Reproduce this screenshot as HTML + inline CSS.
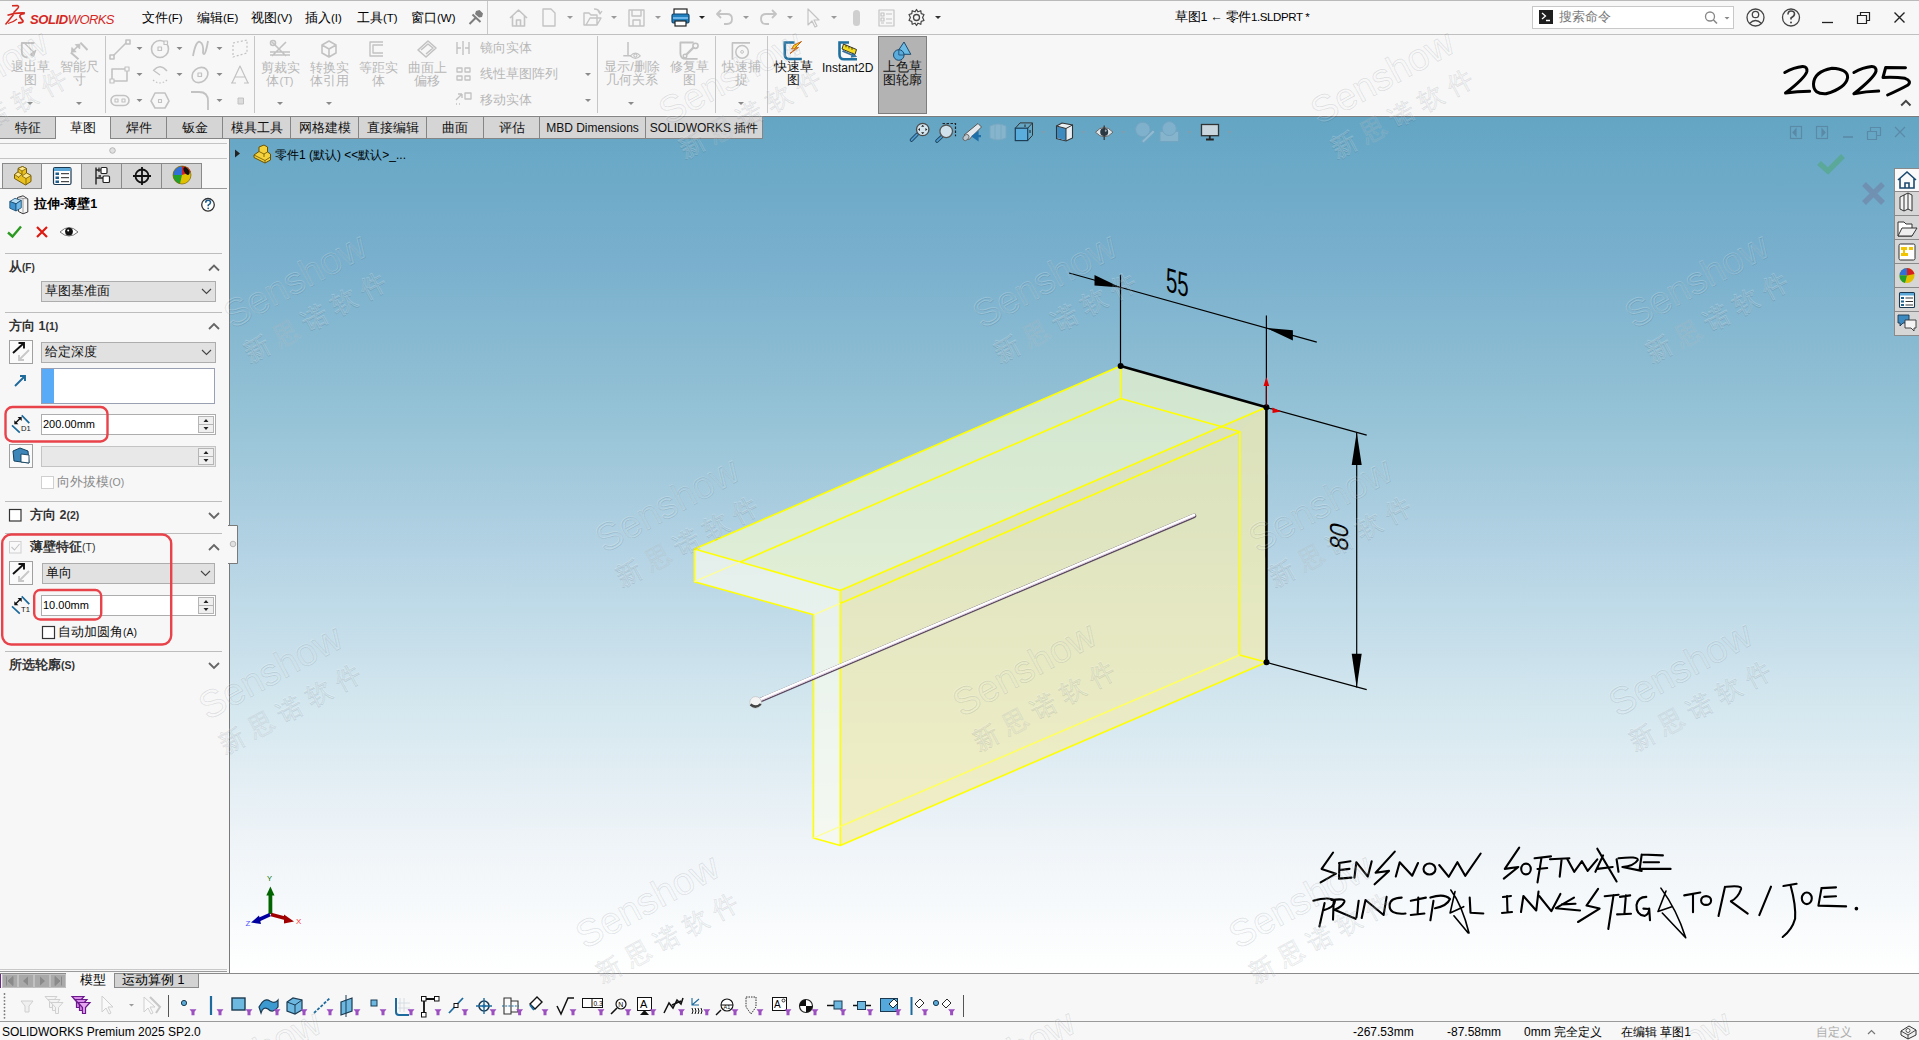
<!DOCTYPE html>
<html><head><meta charset="utf-8">
<style>
*{box-sizing:border-box}
html,body{margin:0;padding:0}
body{width:1919px;height:1040px;position:relative;overflow:hidden;background:#f7f7f7;font-family:"Liberation Sans",sans-serif;font-size:13px;color:#000}
.a{position:absolute}
.t{position:absolute;white-space:nowrap;line-height:1}
#topline{left:0;top:0;width:1919px;height:1px;background:#bababa}
#menusep{left:0;top:34px;width:1919px;height:1px;background:#c0c0c0}
#vp{left:230px;top:116px;width:1689px;height:857px;background:linear-gradient(to bottom,#64a5c4 0px,#68a8c6 29px,#78afcd 137px,#93c1d5 289px,#b4d3e4 437px,#d4e7ef 589px,#eff4f8 727px,#fdfefe 844px,#ffffff 857px)}
.tab{position:absolute;top:116px;height:23px;background:#d5d5d5;border:1px solid #858585;border-left:none;text-align:center;line-height:21px;font-size:13px;color:#111;white-space:nowrap}
.tab.act{background:#f7f7f7;border-bottom:none}
#panel{left:0;top:139px;width:230px;height:834px;background:#f7f7f7;border-right:1px solid #7a7a7a}
.sep{position:absolute;height:1px;background:#b9b9b9}
.hdr{position:absolute;font-weight:bold;font-size:12.5px;color:#222}
.dd{position:absolute;background:#e1e1e1;border:1px solid #adadad}
.inp{position:absolute;background:#fff;border:1px solid #adadad}
.ibox{position:absolute;background:#fafafa;border:1px solid #a8a8a8}
.redr{position:absolute;border:2.5px solid #e8434a;border-radius:8px}
.gray{color:#b0b0b0}
</style></head><body>
<div class="a" id="topline"></div>
<div class="a" id="menusep"></div>
<!-- menu bar -->
<svg class="a" style="left:4px;top:4px" width="24" height="22" viewBox="0 0 24 22">
<path d="M8 1.8 L13.5 1.6 Q15.5 2.2 13.8 4.2 L9.5 8.8" fill="none" stroke="#d5281f" stroke-width="1.5"/>
<path d="M3.5 11.2 Q12 8.5 21 9" fill="none" stroke="#d5281f" stroke-width="1.6"/>
<path d="M1.5 20.5 L9.5 10.5" fill="none" stroke="#d5281f" stroke-width="1.5"/>
<path d="M4 19.5 Q9 18.5 13 15" fill="none" stroke="#d5281f" stroke-width="1.2"/>
<path d="M20.5 9.5 Q15 10 16 13 L19 17 Q19.5 18.8 14 18.8" fill="none" stroke="#d5281f" stroke-width="1.8"/>
</svg>
<div class="t" style="left:30px;top:12.5px;font-size:13px;color:#d5281f;font-style:italic;letter-spacing:-0.6px"><b style="letter-spacing:-0.4px">SOLID</b>WORKS</div>
<div class="t" style="left:142px;top:11px;font-size:13px">文件<span style="font-size:11.5px">(F)</span></div>
<div class="t" style="left:197px;top:11px;font-size:13px">编辑<span style="font-size:11.5px">(E)</span></div>
<div class="t" style="left:251px;top:11px;font-size:13px">视图<span style="font-size:11.5px">(V)</span></div>
<div class="t" style="left:305px;top:11px;font-size:13px">插入<span style="font-size:11.5px">(I)</span></div>
<div class="t" style="left:357px;top:11px;font-size:13px">工具<span style="font-size:11.5px">(T)</span></div>
<div class="t" style="left:411px;top:11px;font-size:13px">窗口<span style="font-size:11.5px">(W)</span></div>
<div class="t" style="left:1175px;top:11px;font-size:12.5px;letter-spacing:-0.3px">草图1 ← 零件<span style="font-size:11.5px;letter-spacing:-0.4px">1.SLDPRT *</span></div>


<!-- quick access -->
<svg class="a" style="left:0;top:0" width="1919" height="116" viewBox="0 0 1919 116">
<g fill="none" stroke-linejoin="round">
<!-- pin -->
<path d="M476 11 L479.5 10 L483 13.5 L482 17 L479 17.5 L475 14 Z" fill="#7e7e7e" stroke="none"/>
<path d="M472.5 14.5 L480.5 22 M469.5 24 L476 17.5" stroke="#7e7e7e" stroke-width="2"/>
<line x1="487.5" y1="1" x2="487.5" y2="34" stroke="#c8c8c8"/>
<!-- home -->
<path d="M510 18 L518.5 10 L527 18 M512.5 16 V26 H524.5 V16 M516.5 26 V20 H520.5 V26" stroke="#c4c4c4" stroke-width="1.6"/>
<!-- new -->
<path d="M543 9 H551 L555 13 V26 H543 Z" stroke="#c4c4c4" stroke-width="1.4"/>
<!-- open -->
<path d="M584 13 H589 L591 15 H597 V25 H584 Z M586 25 L590 18 H601 L597 25" stroke="#c4c4c4" stroke-width="1.4"/>
<path d="M594 9 Q599 9 600 13 M598 11 L600 14 L602 11" stroke="#c4c4c4" stroke-width="1.3"/>
<!-- save -->
<path d="M629 10 H644 V26 H629 Z M632 10 V16 H641 V10 M633 20 H640 V26 H633 Z" stroke="#c4c4c4" stroke-width="1.4"/>
<!-- undo -->
<path d="M718 14 H727 Q732 14 732 19 Q732 24 727 24 H724 M721 10 L717 14 L721 18" stroke="#c4c4c4" stroke-width="1.8"/>
<!-- redo -->
<path d="M775 14 H766 Q761 14 761 19 Q761 24 766 24 H769 M772 10 L776 14 L772 18" stroke="#c4c4c4" stroke-width="1.8"/>
<!-- cursor -->
<path d="M808 9 L808 25 L812 21 L815 27 L817 26 L814 20 L819 20 Z" stroke="#c4c4c4" stroke-width="1.2"/>
<!-- rebuild pill -->
<rect x="853" y="10" width="7" height="16" rx="3.5" fill="#cfcfcf" stroke="none"/>
<!-- properties -->
<path d="M879 10 H894 V26 H879 Z M881 13 H884 V16 H881 Z M881 18 H884 V21 H881 Z M886 14 H892 M886 19 H892 M881 23 H884 M886 23 H892" stroke="#c4c4c4" stroke-width="1.2"/>
<!-- gear -->
<circle cx="916.5" cy="17.5" r="3" stroke="#444" stroke-width="1.3"/>
<path d="M916.5 9.5 L918 11.8 L920.8 10.7 L921.2 13.6 L924 14.5 L922.6 17.5 L924 20.5 L921.2 21.4 L920.8 24.3 L918 23.2 L916.5 25.5 L915 23.2 L912.2 24.3 L911.8 21.4 L909 20.5 L910.4 17.5 L909 14.5 L911.8 13.6 L912.2 10.7 L915 11.8 Z" stroke="#444" stroke-width="1.2"/>
</g>
<!-- printer -->
<g>
<rect x="674" y="9" width="13" height="6" fill="#fff" stroke="#222" stroke-width="1.2"/>
<rect x="672" y="14" width="17" height="9" rx="1.5" fill="#1f7fbf" stroke="#13456b" stroke-width="1.2"/>
<rect x="675" y="21" width="11" height="5" fill="#fff" stroke="#222" stroke-width="1.2"/>
<rect x="673" y="17" width="15" height="2" fill="#6fb6e8"/>
</g>
<!-- dropdown arrows -->
<g fill="#9a9a9a">
<path d="M567 16 h6 l-3 3 z"/><path d="M611 16 h6 l-3 3 z"/><path d="M655 16 h6 l-3 3 z"/>
<path d="M699 16 h6 l-3 3 z" fill="#222"/><path d="M743 16 h6 l-3 3 z"/><path d="M787 16 h6 l-3 3 z"/>
<path d="M831 16 h6 l-3 3 z"/><path d="M935 16 h6 l-3 3 z" fill="#333"/>
</g>
<!-- search box -->
<rect x="1532.5" y="6.5" width="201" height="22" fill="#fff" stroke="#c8c8c8"/>
<rect x="1539" y="10" width="14" height="14" fill="#1f1f1f"/>
<path d="M1542 13 L1545.5 16 L1542 19 M1546 20.5 H1550" stroke="#fff" stroke-width="1.3" fill="none"/>
<circle cx="1710" cy="16.5" r="4.5" fill="none" stroke="#888" stroke-width="1.3"/>
<path d="M1713.3 19.8 L1717 23.5" stroke="#888" stroke-width="1.6"/>
<path d="M1724.5 17 h5 l-2.5 2.5 z" fill="#888"/>
<!-- user / help -->
<circle cx="1755.5" cy="17.5" r="8.5" fill="none" stroke="#444" stroke-width="1.3"/>
<circle cx="1755.5" cy="14.5" r="3.2" fill="none" stroke="#444" stroke-width="1.3"/>
<path d="M1749.5 23.5 Q1755.5 17.5 1761.5 23.5" fill="none" stroke="#444" stroke-width="1.3"/>
<circle cx="1791" cy="17.5" r="8.5" fill="none" stroke="#444" stroke-width="1.3"/>
<path d="M1788 14.5 Q1788 11 1791 11 Q1794.5 11 1794.5 14 Q1794.5 16 1791 18 V19.5" fill="none" stroke="#444" stroke-width="1.6"/>
<circle cx="1791" cy="22.5" r="1" fill="#444"/>
<!-- window controls -->
<path d="M1822 22.5 H1833" stroke="#222" stroke-width="1.3"/>
<path d="M1857.5 15.5 H1866.5 V23.5 H1857.5 Z M1860.5 15.5 V12.5 H1869.5 V20.5 H1866.5" fill="none" stroke="#222" stroke-width="1.2"/>
<path d="M1894.5 12.5 L1904.5 22.5 M1904.5 12.5 L1894.5 22.5" stroke="#222" stroke-width="1.4"/>
</svg>
<div class="t" style="left:1559px;top:11px;font-size:12.5px;color:#777">搜索命令</div>
<!-- 2025 handwritten -->
<svg class="a" style="left:1770px;top:55px" width="149" height="55" viewBox="1770 55 149 55">
<g fill="none" stroke="#000" stroke-width="3" stroke-linecap="round" stroke-linejoin="round">
<path d="M1784.8 72.5 Q1794 67.5 1802.6 66.6 Q1807.5 66.5 1806.9 71.3 Q1805 78 1785.5 93 Q1797 91.5 1809.6 91.2"/>
<path d="M1832 68.2 Q1848 69 1847.6 77.5 Q1846 88 1826 93.8 Q1813.5 94.5 1813.5 84 Q1814 71.5 1832 68.2 Z"/>
<path d="M1853.9 72.5 Q1863 67.5 1871.7 66.6 Q1876.5 66.5 1876 71.3 Q1874 78 1853.9 93.8 Q1866 91.5 1878.7 91.1"/>
<path d="M1905.5 67.8 L1885.7 67.4 L1883 77.5 Q1896 77 1905 78.3 Q1912 81 1908 85 Q1900 89.5 1887.6 95"/>
</g>
<path d="M1901.2 105.5 L1905.9 100.8 L1910.5 105.5" fill="none" stroke="#444" stroke-width="2"/>
</svg>

<!-- ribbon -->
<svg class="a" style="left:0;top:35px" width="960" height="81" viewBox="0 35 960 81">
<g stroke="#c6c6c6" stroke-width="1">
<line x1="105.5" y1="36" x2="105.5" y2="113"/><line x1="254.5" y1="36" x2="254.5" y2="113"/>
<line x1="597.5" y1="36" x2="597.5" y2="113"/><line x1="715.5" y1="36" x2="715.5" y2="113"/>
<line x1="767.5" y1="36" x2="767.5" y2="113"/>
</g>
<g fill="none" stroke="#c2c2c2" stroke-width="1.6" stroke-linejoin="round">
<!-- exit sketch -->
<path d="M34.4 43 H21.8 V52 Q21.8 57 27.5 57.5" stroke-width="1.8"/>
<path d="M23.6 42.3 L34 52.5" stroke-width="1.2"/>
<path d="M36 50 L30 54.5 L33.5 56.5 Z" fill="#c6c6c6" stroke-width="1"/>
<!-- smart dim -->
<path d="M70.8 52.5 L78.5 59.2 M80.4 42.6 L87.5 50" stroke-width="2"/>
<path d="M73 51 L79 45" stroke-width="1.6"/>
<path d="M71.5 52.2 L71.8 47.5 L76.2 51.8 Z M80 44.2 L79.7 49 L75.3 44.6 Z" fill="#c2c2c2" stroke-width="0.8"/>
<!-- line -->
<path d="M112 57 L127 42"/><rect x="110" y="55" width="4" height="4" fill="#f7f7f7"/><rect x="126" y="40" width="4" height="4" fill="#f7f7f7"/>
<!-- circle -->
<circle cx="160" cy="49" r="8.5"/><rect x="158" y="47" width="3.5" height="3.5" stroke-width="1.2"/><rect x="164" y="41" width="3.5" height="3.5" fill="#f7f7f7" stroke-width="1.2"/>
<!-- spline -->
<path d="M193 56 Q196 40 200 42 Q204 44 203 53 Q205 58 208 41" stroke-width="1.8"/>
<!-- plane dashed -->
<path d="M233 43 L247 40 V53 L233 57 Z" stroke-dasharray="2 2" stroke-width="1.2"/>
<!-- rect -->
<path d="M112 69 H127 V81 H112 Z"/><rect x="110" y="79" width="4" height="4" fill="#f7f7f7" stroke-width="1.2"/><rect x="125" y="67" width="4" height="4" fill="#f7f7f7" stroke-width="1.2"/>
<!-- arc -->
<path d="M154 70 Q160 63 167 71" /><path d="M153 70 L160 75" stroke-width="1.2"/>
<path d="M153 80 Q160 86 167 80" stroke-dasharray="1.5 2" stroke-width="1.2"/>
<!-- ellipse -->
<ellipse cx="200" cy="75" rx="8.5" ry="7" transform="rotate(-40 200 75)"/><rect x="198" y="73" width="3.5" height="3.5" stroke-width="1.2"/>
<!-- text A -->
<path d="M232 83 L240 66 L248 83 M235 77 H245 M231 83 H236 M244 83 H249" stroke-width="1.2"/>
<!-- slot -->
<rect x="111" y="95.5" width="18" height="10" rx="5"/><rect x="115" y="99" width="3" height="3" stroke-width="1.1"/><rect x="122" y="99" width="3" height="3" stroke-width="1.1"/>
<!-- polygon -->
<path d="M155 93 H165 L169 101 L165 108 H155 L151 101 Z"/><rect x="158.5" y="99.5" width="3" height="3" stroke-width="1.1"/>
<!-- fillet -->
<path d="M191 92 H199 Q208 92 208 101 V110" stroke-width="1.8"/>
<rect x="238" y="98" width="5.5" height="6" fill="#dcdcdc" stroke-width="1"/>
<!-- trim -->
<path d="M272 42 L286 56 M286 42 L272 56 M270 52 H290 M270 55 H290" stroke-width="1.6"/>
<circle cx="273" cy="43" r="2.5"/>
<!-- convert -->
<path d="M322 45 L329 41 L336 45 V53 L329 57 L322 53 Z M322 45 L329 49 L336 45 M329 49 V57"/>
<!-- offset -->
<path d="M383 42 H370 V56 H383 M383 45 H373 V53 H383" stroke-width="1.4"/>
<!-- offset on surface -->
<path d="M418 50 L428 41 L436 48 L426 57 Z M421 50 L428 44 L433 48 L426 54"/>
<!-- mirror etc small -->
<path d="M457 42 V54 M469 42 V54 M463 41 V55 M457 48 H461 M465 48 H469" stroke-width="1.4"/>
<path d="M457 68 h5 v4 h-5z M465 68 h5 v4 h-5z M457 76 h5 v4 h-5z M465 76 h5 v4 h-5z" stroke-width="1.3"/>
<path d="M456 100 L462 94 M462 94 H458 M462 94 V98" stroke-width="1.4"/><rect x="465" y="93" width="6" height="6" stroke-width="1.3"/>
<path d="M456 104 h1 M459 104 h1" stroke-dasharray="1 2"/>
<!-- show/delete relations -->
<path d="M628 42 V55.8 M623.3 55.8 H631" stroke-width="1.5"/>
<path d="M630.5 55.8 Q635.4 50.5 640.3 55.8 Q635.4 61 630.5 55.8 Z" stroke-width="1.1"/><circle cx="635.4" cy="55.6" r="1.6" stroke-width="1.1"/>
<!-- repair -->
<path d="M693.7 42.5 H680.4 V53.5 Q680.4 58.9 686 58.9 H697.6" stroke-width="1.8"/>
<path d="M686 55 L694 47" stroke-width="2.4"/><circle cx="695.5" cy="45.8" r="2.6" stroke-width="1.6"/><circle cx="685" cy="56" r="1.8" stroke-width="1.4"/>
<!-- quick snap -->
<path d="M750 42.9 H732.4 V59.7" stroke-width="1.6"/><circle cx="742.1" cy="51.9" r="6.3" stroke-width="1.5"/><circle cx="742.1" cy="51.9" r="1.4" stroke-width="1"/>
</g>
<!-- dropdowns -->
<g fill="#8a8a8a">
<path d="M136.5 47 h6 l-3 3z"/><path d="M176.5 47 h6 l-3 3z"/><path d="M216.5 47 h6 l-3 3z"/>
<path d="M136.5 73 h6 l-3 3z"/><path d="M176.5 73 h6 l-3 3z"/><path d="M216.5 73 h6 l-3 3z"/>
<path d="M136.5 99 h6 l-3 3z"/><path d="M216.5 99 h6 l-3 3z"/>
<path d="M27 102 h6 l-3 3z"/><path d="M76 102 h6 l-3 3z"/>
<path d="M277 102 h6 l-3 3z"/><path d="M326 102 h6 l-3 3z"/>
<path d="M585 73 h6 l-3 3z"/><path d="M585 99 h6 l-3 3z"/>
<path d="M628 102 h6 l-3 3z"/><path d="M738 102 h6 l-3 3z"/>
</g>
<!-- quick sketch (colored) -->
<path d="M786 43 H800 M786 50 H800 M790 43 V57 M795 43 V57" stroke="#d8dde2" stroke-width="0.8"/>
<path d="M794.5 42.5 H784.8 V54.5 Q784.8 59 789.3 59 H801.8" fill="none" stroke="#1f6f9f" stroke-width="2.6"/>
<path d="M801.5 41.5 L794 45 L791.5 49 L795.5 48.5 L790 53.5 L798.5 47.5 L795 48 Z" fill="#f7d000" stroke="#c35000" stroke-width="0.9"/>
<!-- instant2d -->
<path d="M849 42.5 H839.5 V54.5 Q839.5 59.3 844 59.3 H857" fill="none" stroke="#1f6f9f" stroke-width="2.6"/>
<path d="M843.5 44 L856.5 49.5 L855 54.5 L842 49 Z" fill="#f4dc20" stroke="#222" stroke-width="0.9"/>
<path d="M846 45 V47.3 M849 46.3 V48.5 M852 47.5 V49.8" stroke="#222" stroke-width="0.8"/>
<path d="M843 50.5 L853 55 L852 52.8 L856.5 56.5 L851 57.2 L852 55.5 L842.5 51.5 Z" fill="#2e86c0" stroke="#1d4a6e" stroke-width="0.6"/>
<!-- shaded sketch contours highlighted -->
<rect x="878.5" y="36.5" width="48" height="77" fill="#b3b3b3" stroke="#7e7e7e"/>
<path d="M904 42 L910.8 54.3 H895.8 Z" fill="#6cbbe4" stroke="#1d4a6e" stroke-width="1"/>
<circle cx="898.8" cy="55" r="5.3" fill="#5aacdc" stroke="#1d4a6e" stroke-width="1"/>
<path d="M898.8 55 V49.7 M898.8 55 H904" stroke="#1d4a6e" stroke-width="0.8"/>
</svg>
<div class="t gray" style="left:11px;top:60px;font-size:13px;line-height:13.3px;width:39px;text-align:center;white-space:normal;word-break:break-all;color:#b8b8b8">退出草图</div>
<div class="t gray" style="left:60px;top:60px;font-size:13px;line-height:13.3px;width:39px;text-align:center;white-space:normal;word-break:break-all;color:#b8b8b8">智能尺寸</div>
<div class="t" style="left:260px;top:61px;font-size:13px;line-height:13px;width:40px;text-align:center;white-space:normal;color:#b8b8b8">剪裁实<br>体<span style="font-size:11px">(T)</span></div>
<div class="t" style="left:309px;top:61px;font-size:13px;line-height:13px;width:40px;text-align:center;white-space:normal;color:#b8b8b8">转换实<br>体引用</div>
<div class="t" style="left:358px;top:61px;font-size:13px;line-height:13px;width:40px;text-align:center;white-space:normal;color:#b8b8b8">等距实<br>体</div>
<div class="t" style="left:407px;top:61px;font-size:13px;line-height:13px;width:40px;text-align:center;white-space:normal;color:#b8b8b8">曲面上<br>偏移</div>
<div class="t" style="left:480px;top:42px;font-size:12.5px;color:#b8b8b8">镜向实体</div>
<div class="t" style="left:480px;top:68px;font-size:12.5px;color:#b8b8b8">线性草图阵列</div>
<div class="t" style="left:480px;top:94px;font-size:12.5px;color:#b8b8b8">移动实体</div>
<div class="t" style="left:601px;top:60px;font-size:13px;line-height:13px;width:62px;text-align:center;white-space:normal;color:#b8b8b8">显示/删除<br>几何关系</div>
<div class="t" style="left:669px;top:60px;font-size:13px;line-height:13px;width:40px;text-align:center;white-space:normal;color:#b8b8b8">修复草<br>图</div>
<div class="t" style="left:721px;top:60px;font-size:13px;line-height:13px;width:40px;text-align:center;white-space:normal;color:#b8b8b8">快速捕<br>捉</div>
<div class="t" style="left:773px;top:60px;font-size:13px;line-height:13px;width:40px;text-align:center;white-space:normal;color:#111">快速草<br>图</div>
<div class="t" style="left:822px;top:62px;font-size:12px;color:#111">Instant2D</div>
<div class="t" style="left:882px;top:60px;font-size:13px;line-height:13px;width:40px;text-align:center;white-space:normal;color:#111">上色草<br>图轮廓</div>

<!-- viewport -->
<div class="a" id="vp"></div>
<!-- model -->
<svg class="a" style="left:230px;top:116px" width="1689" height="857" viewBox="230 116 1689 857">
<polygon points="694.4,549.0 840.2,590.4 1266.4,407.3 1120.6,365.9" fill="rgba(245,250,205,0.66)"/>
<polygon points="840.2,590.4 840.3,845.4 1266.5,662.3 1266.4,407.3" fill="rgba(241,236,179,0.73)"/>
<polygon points="1239.9,431.7 1239.6,654.9 1266.5,662.3 1266.4,407.3" fill="rgba(241,236,179,0.12)"/>
<polygon points="694.4,549.0 840.2,590.4 840.3,845.4 813.4,838.0 813.7,614.8 694.4,581.7" fill="rgba(247,250,238,0.72)"/>
<g stroke="#ffff00" stroke-width="1.6" fill="none" stroke-linejoin="round">
<polyline points="694.4,549.0 840.2,590.4 840.3,845.4 813.4,838.0 813.7,614.8 694.4,581.7 694.4,549.0"/>
<polyline points="1266.4,407.3 1266.5,662.3 1239.6,654.9 1239.9,431.7 1120.6,398.6 1120.6,365.9"/>
<line x1="694.4" y1="549.0" x2="1120.6" y2="365.9"/>
<line x1="840.2" y1="590.4" x2="1266.4" y2="407.3"/>
<line x1="840.3" y1="845.4" x2="1266.5" y2="662.3"/>
<line x1="740.2" y1="562.0" x2="1120.6" y2="398.6"/>
<line x1="840.2" y1="603.4" x2="1239.9" y2="431.7"/>
<line x1="840.3" y1="826.4" x2="1239.6" y2="654.9" stroke="#ffff60"/>
</g>
<g stroke="#ffff90" stroke-width="1.3" fill="none">
<line x1="694.4" y1="581.7" x2="740.2" y2="562.0"/>
<line x1="813.7" y1="614.8" x2="840.2" y2="603.4"/>
<line x1="813.4" y1="838.0" x2="840.3" y2="826.4"/>
</g>
<!-- rod -->
<line x1="760" y1="700.3" x2="1194" y2="515.8" stroke="#5a4a60" stroke-width="4.6" stroke-linecap="round"/>
<line x1="760" y1="699.6" x2="1194" y2="515.1" stroke="#ffffff" stroke-width="3" stroke-linecap="round"/>
<line x1="760" y1="700.9" x2="1194" y2="516.4" stroke="#d8c0d8" stroke-width="0.8"/>
<circle cx="755.6" cy="702.4" r="5.8" fill="#f4f4f4" stroke="#bbb" stroke-width="0.6"/>
<path d="M750.5 704.5 Q755.6 709 760.8 704" fill="none" stroke="#444" stroke-width="2.4"/>
<!-- sketch lines -->
<g stroke="#000" fill="none">
<line x1="1120.6" y1="365.9" x2="1266.4" y2="407.3" stroke-width="2.6"/>
<line x1="1266.4" y1="407.3" x2="1266.5" y2="662.3" stroke-width="2.6"/>
<!-- 55 dim -->
<line x1="1069.1" y1="273" x2="1316.8" y2="342.2" stroke-width="1.2"/>
<line x1="1120.5" y1="274.7" x2="1120.5" y2="366" stroke-width="1.2"/>
<line x1="1266.4" y1="315.5" x2="1266.4" y2="407" stroke-width="1.2"/>
<!-- 80 dim -->
<line x1="1266.5" y1="407.5" x2="1366.7" y2="435.2" stroke-width="1.2"/>
<line x1="1267" y1="662.5" x2="1366.7" y2="689.7" stroke-width="1.2"/>
<line x1="1356.7" y1="432.3" x2="1356.7" y2="687.4" stroke-width="1.2"/>
</g>
<g fill="#000">
<circle cx="1120.6" cy="365.9" r="3"/><circle cx="1266.4" cy="407.3" r="3"/><circle cx="1266.5" cy="662.3" r="3"/>
<polygon points="1094.5,275 1094.5,285.5 1120.5,287.4"/>
<polygon points="1266.4,327.9 1292.9,330.2 1292.9,340.6"/>
<polygon points="1356.7,432.3 1351.7,465 1361.7,465"/>
<polygon points="1356.7,687.4 1351.7,653.7 1361.7,653.7"/>
</g>
<line x1="1266.4" y1="406" x2="1266.4" y2="380" stroke="#6a0000" stroke-width="1.2"/>
<polygon points="1266.4,377 1263.6,386 1269.2,386" fill="#e00000"/>
<polygon points="1281,411.5 1272.5,407.5 1272.5,413" fill="#e00000"/>
<text x="0" y="0" font-family="Liberation Sans" font-size="34" fill="#000" transform="translate(1166 291) skewY(15.6) scale(0.6 1)">55</text>
<text x="0" y="0" font-family="Liberation Sans" font-size="26" fill="#000" transform="translate(1347.5 552) skewY(15.6) rotate(-90) scale(0.9 1)">80</text>
</svg>


<!-- viewport overlays -->
<svg class="a" style="left:230px;top:116px" width="1689" height="857" viewBox="230 116 1689 857">
<!-- tree item -->
<path d="M235 149.5 L240 153.5 L235 157.5 Z" fill="#222"/>
<path d="M254 155 L259 151.5 V147 L264 145 L267.5 147 V152 L270.5 154 V160 L265 163 L254 157.5 Z" fill="#f4d23c" stroke="#6a5000" stroke-width="1"/>
<path d="M254 155 L265 160.5 L270.5 157 M265 160.5 V163 M259 151.5 L264 154 L267.5 152 M264 154 V157" fill="none" stroke="#6a5000" stroke-width="0.8"/>
<!-- heads-up view toolbar -->
<g>
<!-- zoom to fit -->
<path d="M917 134.5 L911.5 140" stroke="#1d3e57" stroke-width="3.6" stroke-linecap="round"/>
<path d="M917 134.5 L911.5 140" stroke="#4a9ad0" stroke-width="1.8" stroke-linecap="round"/>
<circle cx="922.7" cy="129.5" r="6.2" fill="#d2e4ee" stroke="#4a4a4a" stroke-width="1.3"/>
<path d="M922.7 124.8 l-1.6 2 h3.2z M922.7 134.2 l-1.6 -2 h3.2z M918 129.5 l2 -1.6 v3.2z M927.4 129.5 l-2 -1.6 v3.2z" fill="#222"/>
<!-- zoom to area -->
<path d="M942.5 123.5 H955.5 V136.2" fill="none" stroke="#222" stroke-width="1.2" stroke-dasharray="2.5 1.5"/>
<path d="M941.5 136.8 L937 141" stroke="#1d3e57" stroke-width="3.6" stroke-linecap="round"/>
<path d="M941.5 136.8 L937 141" stroke="#4a9ad0" stroke-width="1.8" stroke-linecap="round"/>
<circle cx="946.2" cy="131.3" r="6.3" fill="#cfe2ec" stroke="#555" stroke-width="1.3"/>
<!-- previous view -->
<path d="M964 135 L978 123.5 L981.5 127 L968.5 140 Z" fill="#e2e8ec" stroke="#555" stroke-width="1"/>
<ellipse cx="966" cy="137.5" rx="2.5" ry="3.5" transform="rotate(45 966 137.5)" fill="#bfc8ce" stroke="#555" stroke-width="0.8"/>
<path d="M981 136.2 H975 M977.5 133 L973 136.2 L977.5 139.4 Z" stroke="#1f6fa8" stroke-width="2.2" fill="#1f6fa8"/>
<!-- section view (disabled) -->
<path d="M990 126 Q998 122 1006 126 V138 Q998 142 990 138 Z" fill="#86b4cc" stroke="#78a8c2" stroke-width="1"/>
<path d="M995 125 V139 M1001 125 V139" stroke="#78a8c2" stroke-width="1"/>
<!-- view orientation -->
<path d="M1020 122.9 H1032.5 V135.3 L1027.7 140.6 M1020 122.9 L1015.3 128.2 M1032.5 122.9 L1027.7 128.2" fill="none" stroke="#333" stroke-width="1"/>
<rect x="1015.3" y="128.2" width="12.4" height="12.4" fill="#5aaedd" stroke="#1d3e57" stroke-width="1.2"/>
<path d="M1025 124.5 V127 M1030 130 V133" stroke="#222" stroke-width="1"/>
<!-- display style -->
<path d="M1056.5 126 L1062 123 L1072.5 125 V138 L1066 141 L1056.5 138.5 Z" fill="#e8eef2" stroke="#333" stroke-width="1.1"/>
<path d="M1057 126.5 L1066 128.5 V140.5 L1057 138 Z" fill="#3d8ac0"/>
<path d="M1056.5 126 L1066 128.5 L1072.5 125 M1066 128.5 V141" fill="none" stroke="#333" stroke-width="1"/>
<!-- eye -->
<path d="M1095.5 132.2 Q1104.2 122.5 1113 132.2 Q1104.2 141.5 1095.5 132.2 Z" fill="#dbe3e8" stroke="#666" stroke-width="1"/>
<circle cx="1104.2" cy="132" r="4" fill="#2a3a44"/><circle cx="1105.5" cy="130.6" r="1.2" fill="#9ab"/>
<line x1="1104.2" y1="125.5" x2="1104.2" y2="140" stroke="#333" stroke-width="1.2"/>
<!-- edit appearance (disabled) -->
<circle cx="1142.8" cy="129.5" r="7.3" fill="#7fb0cc" stroke="#73a5c0" stroke-width="1"/>
<path d="M1141.5 141 L1153 130 L1155 132 L1143.5 143 Z" fill="#8fbad2" stroke="#73a5c0" stroke-width="1"/>
<!-- apply scene (disabled) -->
<rect x="1160" y="131.5" width="18.6" height="10" fill="#86b4cc" stroke="#73a5c0" stroke-width="1"/>
<circle cx="1169.3" cy="128.6" r="7" fill="#7fb0cc" stroke="#73a5c0" stroke-width="1"/>
<!-- monitor -->
<rect x="1201.5" y="124.5" width="17" height="11.2" fill="#c9d6de" stroke="#333" stroke-width="1.3"/>
<path d="M1209.8 136 V138.8 M1206 139.5 H1213.8" stroke="#222" stroke-width="1.8"/>
</g>
<g fill="#7d9fb2"><path d="M1041 131 h5 l-2.5 3z"/><path d="M1081 131 h5 l-2.5 3z"/><path d="M1121 131 h5 l-2.5 3z"/><path d="M1187 131 h5 l-2.5 3z"/><path d="M1227 131 h5 l-2.5 3z"/></g>
<!-- doc window controls -->
<g fill="none" stroke="#5b8aa6" stroke-width="1.2">
<rect x="1790.5" y="126.5" width="11" height="12"/><path d="M1796 129 L1793 132.5 L1796 136 Z" fill="#5b8aa6"/>
<rect x="1816.5" y="126.5" width="11" height="12"/><path d="M1822 129 L1825 132.5 L1822 136 Z" fill="#5b8aa6"/>
<path d="M1843 137 H1853" stroke-width="1.6"/>
<path d="M1867.5 131.5 H1876.5 V139.5 H1867.5 Z M1870.5 131.5 V127.5 H1880.5 V135.5 H1876.5"/>
<path d="M1895 127 L1905 137 M1905 127 L1895 137"/>
</g>
<!-- confirmation corner -->
<path d="M1819 163 L1828 171 L1843 156" fill="none" stroke="#56a88a" stroke-opacity="0.75" stroke-width="5.5"/>
<path d="M1864 184 L1883 203 M1883 184 L1864 203" fill="none" stroke="#7088a8" stroke-opacity="0.75" stroke-width="5.5"/>
<!-- task pane -->
<rect x="1894.5" y="168.5" width="25" height="167" fill="#d6d6d6" stroke="#8a8a8a"/>
<rect x="1895" y="169" width="24" height="22" fill="#fafafa"/>
<g stroke="#8a8a8a"><line x1="1895" y1="191.5" x2="1919" y2="191.5"/><line x1="1895" y1="215.5" x2="1919" y2="215.5"/><line x1="1895" y1="239.5" x2="1919" y2="239.5"/>
<line x1="1895" y1="263.5" x2="1919" y2="263.5"/><line x1="1895" y1="287.5" x2="1919" y2="287.5"/><line x1="1895" y1="311.5" x2="1919" y2="311.5"/></g>
<path d="M1898 180 L1907 172 L1916 180 M1900 178.5 V188 H1914 V178.5 M1905 188 V183 H1909 V188" fill="none" stroke="#1d4a70" stroke-width="1.6"/>
<path d="M1900 197 L1904 195 V211 L1900 209 Z M1904 195 L1908 193 V209 L1904 211 M1908 193 L1912 195 V211 L1908 209" fill="#f4f4f4" stroke="#333" stroke-width="1"/>
<path d="M1898 222 H1904 L1906 224 H1912 V236 H1898 Z" fill="#fff" stroke="#333" stroke-width="1"/><path d="M1898 236 L1902 228 H1917 L1912 236 Z" fill="#eee" stroke="#333" stroke-width="1"/>
<rect x="1899" y="244" width="16" height="16" rx="1.5" fill="#fff" stroke="#333" stroke-width="1"/>
<path d="M1901 247 H1907 V250 H1905 V253 H1908 V256 H1901 V253 H1903 V250 H1901 Z M1909 247 H1913 V250 H1909 Z" fill="#f2c400"/>
<circle cx="1907" cy="275.5" r="7.5" fill="#e0c000"/><path d="M1907 275.5 V268 A7.5 7.5 0 0 0 1899.5 275.5 Z" fill="#2f6fd6"/><path d="M1907 275.5 H1899.5 A7.5 7.5 0 0 0 1905 283 Z" fill="#22a02a"/><path d="M1907 275.5 V268 A7.5 7.5 0 0 1 1914.5 274 Z" fill="#d42020"/>
<rect x="1899.5" y="292.5" width="15" height="15" rx="1" fill="#fff" stroke="#1b3a52" stroke-width="1.1"/><rect x="1900" y="293" width="14" height="2.5" fill="#5aa6d6"/>
<path d="M1901 298 h3 M1901 301.5 h3 M1901 305 h3" stroke="#1e5f8e" stroke-width="2"/><path d="M1905.5 298 H1913 M1905.5 301.5 H1913 M1905.5 305 H1913" stroke="#222" stroke-width="0.9"/>
<path d="M1898 315 H1909 V323 H1903 L1900 326 V323 H1898 Z" fill="#3d8ac0" stroke="#1b3a52" stroke-width="0.9"/>
<path d="M1905 320 H1916 V328 H1914 V331 L1911 328 H1905 Z" fill="#f4f4f4" stroke="#333" stroke-width="0.9"/>
<!-- triad -->
<line x1="270.4" y1="914" x2="270.4" y2="895" stroke="#006400" stroke-width="3.8"/>
<polygon points="270.4,886.5 266.3,895.5 274.5,895.5" fill="#006400"/>
<line x1="271" y1="914.6" x2="286" y2="918.5" stroke="#a00000" stroke-width="3.6"/>
<polygon points="294,921.5 284,914.5 284,923.5" fill="#a00000"/>
<line x1="270" y1="914.6" x2="257" y2="920.5" stroke="#0000a0" stroke-width="3.6"/>
<polygon points="251,922.5 259,915.5 261,924" fill="#0000a0"/>
<text x="267" y="881" font-family="Liberation Sans" font-size="7.5" fill="#007000">Y</text>
<text x="296" y="923.5" font-family="Liberation Sans" font-size="8" fill="#ff3030">X</text>
<text x="245.5" y="925.5" font-family="Liberation Sans" font-size="8" fill="#5050ff">Z</text>
</svg>
<div class="t" style="left:275px;top:149px;font-size:12px;color:#000">零件1 (默认) &lt;&lt;默认&gt;_...</div>

<!-- handwriting -->
<svg class="a" style="left:1300px;top:840px" width="580" height="105" viewBox="1300 840 580 105">
<g fill="none" stroke="#000" stroke-width="2.1" stroke-linecap="round" stroke-linejoin="round">
<path d="M1333.1 852.5 L1321.6 868.9 L1336 873.7 L1320.6 882.4"/>
<path d="M1339 863 L1350.5 861.2 M1340.9 869.9 L1349.5 868.9 M1339 878.6 L1351.5 877.6 M1339.5 863 L1339 878.6"/>
<path d="M1354.4 877.6 L1356.3 862.2 L1367.8 876.6 L1371.7 861.2"/>
<path d="M1394.8 851.6 L1375.6 872.8 L1389 870.9 L1374.6 884.3"/>
<path d="M1395.8 876.6 L1399.7 862.2 L1412.2 875.7 L1418 863"/>
<ellipse cx="1429.5" cy="869" rx="6" ry="5.5"/>
<path d="M1439.2 865 L1448.8 876.8 L1457.4 862.2 L1465.2 875.8 L1480.7 853.5"/>
<path d="M1519.2 847.7 L1504.8 868.9 L1518.3 867 L1503.8 878.6"/>
<ellipse cx="1526" cy="869" rx="4.8" ry="5.4"/>
<path d="M1534.6 858.3 L1551 856.4 M1541.4 858.3 L1537.5 882.4 M1537.5 869 L1547.2 868"/>
<path d="M1550 859.3 L1569.4 858.3 M1561.6 859.3 L1559.7 876.6"/>
<path d="M1567.4 859.3 L1574.2 871.8 L1581.9 861.2 L1587.7 870.9 L1597.3 859.3"/>
<path d="M1597.3 848.7 L1616.6 881.5 M1603.1 855.4 L1595.4 871.8 M1597.3 868.9 L1612.7 867"/>
<path d="M1616.6 859.3 L1618.5 871.8 M1618.5 858.3 Q1638 856 1637.8 860 Q1634 866 1622.4 867 L1641.7 870.9"/>
<path d="M1641.7 854.5 L1662.9 855.4 M1643.6 862.2 L1659 862.2 M1639.7 868.9 L1670.6 868.9 M1641.7 854.5 L1639.7 868.9"/>
<!-- line 2 -->
<path d="M1324.6 903 L1319.4 926.4 M1313.3 900.7 Q1330 896 1335 901 Q1335 907 1323 910.5"/>
<path d="M1333.7 900.7 L1333 919.6 M1331.5 900 Q1346 898 1344.3 902 Q1342 907 1334.5 909.7 L1355.6 918.8"/>
<path d="M1358.7 900.7 L1356.4 917.3"/>
<path d="M1361.7 918 L1365.5 900 L1383.6 915 L1386.6 896.9"/>
<path d="M1401.7 897.6 Q1390 898 1389.6 905 Q1389 915 1405.5 913.5"/>
<path d="M1418.3 897.6 L1417.6 914.3 M1410.8 900.7 L1425.9 897.6 M1410.8 915 L1424.4 913.5"/>
<path d="M1433.5 900.7 L1430.4 920.3 M1430.4 897.6 Q1444 893 1450 899 Q1447 906 1435 908.2"/>
<path d="M1450.8 890 Q1462 905 1469 933 M1455 891.6 L1450.1 913 L1463.7 906.7 M1453.9 915.8 L1468.2 933" stroke-width="1.6"/>
<path d="M1469.7 897.6 L1470.5 912.8 L1483.3 913.5"/>
<path d="M1507 896 L1507.5 912 M1503 897 L1511 896 M1502 913 L1512 912"/>
<path d="M1521 912 L1523.4 896 L1536.2 910.5 L1538.5 891.6"/>
<path d="M1539.2 896 L1551.3 911.2 L1560.4 893.9"/>
<path d="M1574 897.6 L1555.9 908.2 L1580 910.5 M1561.9 904.4 L1575.5 903.7"/>
<path d="M1598.1 888.9 L1586.5 905.6 L1599.6 908.6 L1578 922"/>
<path d="M1604.7 896.2 L1618.6 894.7 M1613.5 895.4 L1608.3 929"/>
<path d="M1625.9 895.4 L1624.4 913.7 M1620 896.9 L1630.2 895.4 M1617.1 914.4 L1631 913.7"/>
<path d="M1646.3 896.9 Q1638 897 1636.5 905 Q1636 915 1644.8 915.9 Q1649 914 1649.2 909 L1643.4 908.6 M1649.2 908.6 L1650 920.2"/>
<path d="M1660.9 888.1 Q1677 910 1685.7 937.7 M1666 891 L1658 911.5 L1672.5 906.4 M1662.3 913 L1685.7 937.7" stroke-width="1.6"/>
<path d="M1684.2 895.4 L1700.3 892.5 M1693 894 L1693 912.2"/>
<ellipse cx="1706.1" cy="900.5" rx="5" ry="4.4"/>
<path d="M1725 886.7 L1718.5 915.9 M1726.5 886.7 Q1742 885 1741.1 889 Q1738 898 1730.9 901.3 L1747.7 913.7"/>
<path d="M1771 886.7 L1759.3 915.1"/>
<path d="M1783.4 886 L1796.6 883.8 M1790.7 886 Q1796 905 1795.1 918.8 Q1792 930 1782.7 937"/>
<ellipse cx="1806.8" cy="898.3" rx="5" ry="5.8"/>
<path d="M1821.4 888.1 L1836 887.4 M1821.4 888.9 L1818.4 905.6 L1846.1 906.4 M1824.3 896.9 L1836 896.2"/>
<circle cx="1856.4" cy="908.6" r="0.8" fill="#000"/>
</g>
</svg>

<div class="a" style="left:0;top:116px;width:1919px;height:1px;background:#7c7c7c"></div>
<div class="a" style="left:0;top:115px;width:1919px;height:1px;background:#fdfdfd"></div>
<!-- tabs -->
<div class="tab" style="left:0;width:56px">特征</div>
<div class="tab act" style="left:56px;width:55px">草图</div>
<div class="tab" style="left:111px;width:56px">焊件</div>
<div class="tab" style="left:167px;width:56px">钣金</div>
<div class="tab" style="left:223px;width:68px">模具工具</div>
<div class="tab" style="left:291px;width:68px">网格建模</div>
<div class="tab" style="left:359px;width:68px">直接编辑</div>
<div class="tab" style="left:427px;width:57px">曲面</div>
<div class="tab" style="left:484px;width:56px">评估</div>
<div class="tab" style="left:540px;width:106px"><span style="font-size:12px">MBD Dimensions</span></div>
<div class="tab" style="left:646px;width:117px"><span style="font-size:12px">SOLIDWORKS 插件</span></div>

<!-- panel -->
<!-- panel content -->
<svg class="a" style="left:0;top:139px" width="230" height="834" viewBox="0 139 230 834">
<rect x="0" y="139" width="229" height="834" fill="#f7f7f7"/>
<line x1="0" y1="143.5" x2="227" y2="143.5" stroke="#c4c4c4"/>
<circle cx="112.5" cy="150.5" r="2.8" fill="#e0e0e0" stroke="#aaa" stroke-width="0.8"/>
<line x1="0" y1="158.5" x2="227" y2="158.5" stroke="#c4c4c4"/>
<line x1="0" y1="188.5" x2="227" y2="188.5" stroke="#9a9a9a"/>
<!-- panel tabs -->
<rect x="2.5" y="163.5" width="39" height="25" fill="#d5d5d5" stroke="#8a8a8a"/>
<rect x="41.5" y="163.5" width="40" height="26" fill="#f7f7f7" stroke="none"/><path d="M41.5 189 V163.5 H81.5 V189" fill="none" stroke="#8a8a8a"/>
<rect x="81.5" y="163.5" width="40" height="25" fill="#d5d5d5" stroke="#8a8a8a"/>
<rect x="121.5" y="163.5" width="40" height="25" fill="#d5d5d5" stroke="#8a8a8a"/>
<rect x="161.5" y="163.5" width="40" height="25" fill="#d5d5d5" stroke="#8a8a8a"/>

<!-- tab1 part icon -->
<path d="M14.5 174.5 L18 172 V168.5 L22.5 166.5 L26.5 168.5 V173 L31 175.5 V181.5 L25.5 185 L14.5 178.5 Z" fill="#e8c020" stroke="#6a5000" stroke-width="0.9"/>
<path d="M18 168.5 L22.5 166.5 L26.5 168.5 L22 171 Z M14.5 174.5 L18 172 L22 174.5 L18.5 177 Z M22 176 L26.5 173 L31 175.5 L26 178.5 Z" fill="#fbe68a" stroke="#6a5000" stroke-width="0.7"/>
<path d="M18.5 177 V178 M22 171 V175 M26 178.5 V185" fill="none" stroke="#6a5000" stroke-width="0.7"/>
<!-- tab2 property icon -->
<rect x="53.5" y="167.5" width="17.5" height="17" rx="1.5" fill="#fff" stroke="#1b3a52" stroke-width="1.2"/>
<rect x="54" y="168" width="16.5" height="3" fill="#5aa6d6"/>
<rect x="55.5" y="172.5" width="3.5" height="2.5" fill="#1e5f8e"/><rect x="55.5" y="176.5" width="3.5" height="2.5" fill="#1e5f8e"/><rect x="55.5" y="180.5" width="3.5" height="2.5" fill="#1e5f8e"/>
<path d="M61 173.7 H69 M61 177.7 H69 M61 181.7 H69" stroke="#222" stroke-width="1"/>
<!-- tab3 config icon -->
<path d="M96 167.5 V184.5 M96 170 H99 M96 178 H103 M98.5 176 H101" fill="none" stroke="#222" stroke-width="1.4"/>
<rect x="101" y="167.5" width="6" height="6" rx="1" fill="#fff" stroke="#222" stroke-width="1.2"/>
<rect x="103" y="176" width="6.5" height="6.5" rx="1" fill="#fff" stroke="#222" stroke-width="1.2"/>
<path d="M99 170 H101 M99 167.5 V172" stroke="#222" stroke-width="1.2"/>
<!-- tab4 crosshair -->
<circle cx="142" cy="176" r="6.5" fill="none" stroke="#111" stroke-width="1.8"/>
<path d="M133 176 H151 M142 167 V185" stroke="#111" stroke-width="1.8"/>
<!-- tab5 sphere -->
<circle cx="182" cy="175" r="9" fill="#e0c000"/>
<path d="M182 175 L182 166 A9 9 0 0 0 173 175 Z" fill="#2f6fd6"/>
<path d="M182 175 L173 175 A9 9 0 0 0 180 183.8 Z" fill="#22a02a"/>
<path d="M182 175 L182 166 A9 9 0 0 1 191 172 L182 175 Z" fill="#d42020"/>
<ellipse cx="186.5" cy="171" rx="2.3" ry="4.3" transform="rotate(-30 186.5 171)" fill="#111"/>
<circle cx="182" cy="175" r="9" fill="none" stroke="#7a6400" stroke-width="0.7"/>
<!-- title -->
<path d="M17.5 197.5 L23 195.8 L27.8 198.8 V212 L23 213.8 L18.5 211.5 Z" fill="#f6f6f6" stroke="#3a3a3a" stroke-width="1"/>
<path d="M23 198.5 V213.5 M17.5 197.5 L23 198.5 L27.8 198.8" fill="none" stroke="#777" stroke-width="0.7"/>
<path d="M9.8 201.5 L15 198.3 L21.3 200.4 L16 203.8 Z" fill="#b5def5" stroke="#1b4a6e" stroke-width="0.8"/>
<path d="M9.8 201.5 L16 203.8 V211 L9.8 208.2 Z" fill="#3f95cf" stroke="#1b4a6e" stroke-width="0.8"/>
<path d="M16 203.8 L21.3 200.4 V207.8 L16 211 Z" fill="#6db8e6" stroke="#1b4a6e" stroke-width="0.8"/>
<circle cx="208" cy="204.8" r="6.3" fill="#fff" stroke="#333" stroke-width="1.3"/>
<path d="M205.7 202.8 Q205.7 200.3 208 200.3 Q210.5 200.3 210.5 202.5 Q210.5 204 208.2 205.2 V206.3" fill="none" stroke="#1a5a8a" stroke-width="1.5"/>
<circle cx="208.2" cy="208.3" r="0.9" fill="#1a5a8a"/>
<!-- ok/cancel/eye -->
<path d="M8 232.5 L12.5 236.5 L21 226.5" fill="none" stroke="#2a9a20" stroke-width="2.4"/>
<path d="M37 227 L47 237 M47 227 L37 237" stroke="#dd1a10" stroke-width="2.2"/>
<path d="M60 232 Q69 223 78 232 Q69 240 60 232 Z" fill="#fff" stroke="#777" stroke-width="1"/>
<circle cx="69" cy="231.6" r="3.9" fill="#111"/><circle cx="68.2" cy="230.5" r="1" fill="#fff"/>
<!-- separators -->
<g stroke="#bdbdbd"><line x1="5" y1="253.5" x2="222" y2="253.5"/><line x1="5" y1="312.5" x2="222" y2="312.5"/>
<line x1="5" y1="501.5" x2="222" y2="501.5"/><line x1="5" y1="533.5" x2="222" y2="533.5"/><line x1="5" y1="651.5" x2="222" y2="651.5"/></g>
<!-- chevrons -->
<g fill="none" stroke="#666" stroke-width="1.8">
<path d="M209 270.5 L214 265.5 L219 270.5"/><path d="M209 329 L214 324 L219 329"/>
<path d="M209 513 L214 518 L219 513"/><path d="M209 550 L214 545 L219 550"/><path d="M209 663 L214 668 L219 663"/>
</g>
<!-- dropdowns -->
<rect x="41.5" y="281.5" width="174" height="20" fill="#e1e1e1" stroke="#adadad"/>
<path d="M202 289 L206.5 293.5 L211 289" fill="none" stroke="#444" stroke-width="1.1"/>
<rect x="41.5" y="342.5" width="174" height="20" fill="#e1e1e1" stroke="#adadad"/>
<path d="M202 350 L206.5 354.5 L211 350" fill="none" stroke="#444" stroke-width="1.1"/>
<rect x="42.5" y="563.5" width="172" height="20" fill="#e1e1e1" stroke="#adadad"/>
<path d="M201 571 L205.5 575.5 L210 571" fill="none" stroke="#444" stroke-width="1.1"/>
<!-- direction icon box -->
<rect x="9.5" y="340.5" width="23" height="23" fill="#fafafa" stroke="#a0a0a0"/>
<path d="M13 353 L24 343 M18.5 343 H24 V348.5" fill="none" stroke="#111" stroke-width="1.9"/>
<path d="M29 350 L19 360 M19 355 V360 H24" fill="none" stroke="#c8c8c8" stroke-width="1.8"/>
<!-- selection box -->
<path d="M15 386 L25 376 M20 376 H25 V381" fill="none" stroke="#1e6a9a" stroke-width="1.9"/>
<rect x="41.5" y="368.5" width="173" height="35" fill="#fff" stroke="#9aa0b4"/>
<rect x="42" y="369" width="12" height="34" fill="#5aabf7"/>
<!-- depth input -->
<rect x="41.5" y="414.5" width="174" height="20" fill="#fff" stroke="#adadad"/>
<rect x="198.5" y="416.5" width="15" height="16" fill="#efefef" stroke="#b5b5b5"/>
<line x1="199" y1="424.5" x2="213" y2="424.5" stroke="#b5b5b5"/>
<path d="M203.5 422 L206 419 L208.5 422 Z M203.5 427 L206 430 L208.5 427 Z" fill="#222"/>
<!-- D1 icon -->
<g transform="translate(0 0)">
<path d="M12 425.3 L19.8 432.6 M21.7 415.4 L29.3 423.2" stroke="#1d6a9c" stroke-width="1.7"/>
<path d="M15.5 423 L20.5 418" stroke="#111" stroke-width="1.4"/>
<path d="M14.3 420.2 V424.3 H18.4 Z M21.7 417 H17.6 L21.7 421.1 Z" fill="#111"/>
<text x="21" y="430.8" font-size="7.6" font-family="Liberation Sans" fill="#111">D1</text>
</g>
<!-- draft -->
<rect x="9.5" y="444.5" width="23" height="23" fill="#fafafa" stroke="#a0a0a0"/>
<path d="M13 451 L20 448 L28 451 L29 463 L14 461 Z" fill="#3d86b8" stroke="#14425f" stroke-width="1"/>
<path d="M21 454 L29 455 V463 L21 462 Z" fill="#fff" stroke="#14425f" stroke-width="0.9"/>
<rect x="41.5" y="446.5" width="174" height="20" fill="#e8e8e8" stroke="#c4c4c4"/>
<rect x="198.5" y="448.5" width="15" height="16" fill="#efefef" stroke="#b5b5b5"/>
<line x1="199" y1="456.5" x2="213" y2="456.5" stroke="#b5b5b5"/>
<path d="M203.5 454 L206 451 L208.5 454 Z M203.5 459 L206 462 L208.5 459 Z" fill="#222"/>
<!-- checkbox draft outward -->
<rect x="41.5" y="476.5" width="12" height="12" fill="#fff" stroke="#d0d0d0"/>
<!-- dir2 checkbox -->
<rect x="9.5" y="509.5" width="11.5" height="11.5" fill="#fff" stroke="#333" stroke-width="1.2"/>
<!-- thin feature checkbox (disabled checked) -->
<rect x="9.5" y="541.5" width="11.5" height="11.5" fill="#f9f9f9" stroke="#cfcfcf"/>
<path d="M11.5 547 L14.5 550 L19.5 544" fill="none" stroke="#c4c4c4" stroke-width="1.1"/>
<!-- thin dir icon -->
<rect x="9.5" y="561.5" width="23" height="23" fill="#fafafa" stroke="#a0a0a0"/>
<path d="M13 574 L24 564 M18.5 564 H24 V569.5" fill="none" stroke="#111" stroke-width="1.9"/>
<path d="M29 571 L19 581 M19 576 V581 H24" fill="none" stroke="#c8c8c8" stroke-width="1.8"/>
<!-- T1 input -->
<rect x="41.5" y="595.5" width="174" height="20" fill="#fff" stroke="#adadad"/>
<rect x="198.5" y="597.5" width="15" height="16" fill="#efefef" stroke="#b5b5b5"/>
<line x1="199" y1="605.5" x2="213" y2="605.5" stroke="#b5b5b5"/>
<path d="M203.5 603 L206 600 L208.5 603 Z M203.5 608 L206 611 L208.5 608 Z" fill="#222"/>
<g transform="translate(0 181)">
<path d="M12 425.3 L19.8 432.6 M21.7 415.4 L29.3 423.2" stroke="#1d6a9c" stroke-width="1.7"/>
<path d="M15.5 423 L20.5 418" stroke="#111" stroke-width="1.4"/>
<path d="M14.3 420.2 V424.3 H18.4 Z M21.7 417 H17.6 L21.7 421.1 Z" fill="#111"/>
<text x="21" y="430.8" font-size="7.6" font-family="Liberation Sans" fill="#111">T1</text>
</g>
<!-- auto fillet checkbox -->
<rect x="42.5" y="626.5" width="12" height="12" fill="#fff" stroke="#333" stroke-width="1.2"/>
<!-- red highlight rects -->
<rect x="5.5" y="407" width="102" height="34.5" rx="7" fill="none" stroke="#e8434a" stroke-width="2.4"/>
<rect x="2.2" y="534.5" width="169" height="110" rx="9" fill="none" stroke="#e8434a" stroke-width="2.4"/>
<rect x="34.2" y="590" width="67" height="29.5" rx="6" fill="none" stroke="#e8434a" stroke-width="2.4"/>
<!-- panel bottom lines -->
<line x1="0" y1="969.5" x2="227" y2="969.5" stroke="#c8c8c8"/>
<line x1="0" y1="971.5" x2="227" y2="971.5" stroke="#9a9a9a"/>
<!-- right border + flyout tab -->
<line x1="229.5" y1="139" x2="229.5" y2="526" stroke="#7a7a7a"/>
<line x1="229.5" y1="563" x2="229.5" y2="973" stroke="#7a7a7a"/>
</svg>
<svg class="a" style="left:228px;top:524px" width="12" height="42" viewBox="228 524 12 42">
<path d="M228 525.5 H237.5 V563.5 H228" fill="#f7f7f7" stroke="#7a7a7a"/>
<rect x="228" y="526" width="9" height="37" fill="#f7f7f7"/>
<circle cx="233" cy="544" r="2.8" fill="#e0e0e0" stroke="#aaa" stroke-width="0.8"/>
</svg>
<div class="t" style="left:34px;top:198px;font-size:12.5px;font-weight:bold">拉伸-薄壁1</div>
<div class="t" style="left:9px;top:261px;font-size:12.5px;font-weight:bold;color:#333">从<span style="font-size:10px">(F)</span></div>
<div class="t" style="left:45px;top:285px;font-size:12.5px;color:#111">草图基准面</div>
<div class="t" style="left:9px;top:320px;font-size:12.5px;font-weight:bold;color:#333">方向 1<span style="font-size:10.5px">(1)</span></div>
<div class="t" style="left:45px;top:346px;font-size:12.5px;color:#111">给定深度</div>
<div class="t" style="left:43px;top:419px;font-size:11px;color:#000">200.00mm</div>
<div class="t" style="left:57px;top:476px;font-size:12.5px;color:#8a8a8a">向外拔模<span style="font-size:10.5px">(O)</span></div>
<div class="t" style="left:30px;top:509px;font-size:12.5px;font-weight:bold;color:#333">方向 2<span style="font-size:10.5px">(2)</span></div>
<div class="t" style="left:30px;top:541px;font-size:12.5px;font-weight:bold;color:#333">薄壁特征<span style="font-size:10.5px;font-weight:normal">(T)</span></div>
<div class="t" style="left:46px;top:567px;font-size:12.5px;color:#111">单向</div>
<div class="t" style="left:43px;top:600px;font-size:11px;color:#000">10.00mm</div>
<div class="t" style="left:58px;top:626px;font-size:12.5px;color:#111">自动加圆角<span style="font-size:10.5px">(A)</span></div>
<div class="t" style="left:9px;top:659px;font-size:12.5px;font-weight:bold;color:#333">所选轮廓<span style="font-size:10.5px">(S)</span></div>


<!-- bottom -->
<svg class="a" style="left:0;top:973px" width="1919" height="67" viewBox="0 973 1919 67">
<rect x="0" y="973" width="1919" height="67" fill="#f7f7f7"/>
<line x1="0" y1="973.5" x2="1919" y2="973.5" stroke="#8a8a8a"/>
<rect x="2" y="974" width="64" height="14" fill="#a9a9a9"/>
<rect x="2.5" y="974.5" width="15" height="13" fill="none" stroke="#c8c8c8" stroke-width="0.8"/>
<rect x="18.5" y="974.5" width="15" height="13" fill="none" stroke="#c8c8c8" stroke-width="0.8"/>
<rect x="34.5" y="974.5" width="15" height="13" fill="none" stroke="#c8c8c8" stroke-width="0.8"/>
<rect x="50.5" y="974.5" width="15" height="13" fill="none" stroke="#c8c8c8" stroke-width="0.8"/>
<path d="M6.5 976.5 V985.5 M13 976.5 L8 981 L13 985.5 Z" fill="#8a8a8a" stroke="#8a8a8a"/>
<path d="M28 976.5 L23 981 L28 985.5 Z" fill="#8a8a8a"/>
<path d="M40 976.5 L45 981 L40 985.5 Z" fill="#8a8a8a"/>
<path d="M55 976.5 L60 981 L55 985.5 Z M61.5 976.5 V985.5" fill="#8a8a8a" stroke="#8a8a8a"/>
<line x1="0.5" y1="974" x2="0.5" y2="988" stroke="#6a2a8a" stroke-width="1"/>
<rect x="114.5" y="973.5" width="84" height="14" fill="#d3d3d3" stroke="#8a8a8a"/>
<line x1="66" y1="973.5" x2="114" y2="973.5" stroke="#f7f7f7"/>
<circle cx="4.5" cy="994.0" r="0.9" fill="#777"/>
<circle cx="4.5" cy="997.4" r="0.9" fill="#777"/>
<circle cx="4.5" cy="1000.8" r="0.9" fill="#777"/>
<circle cx="4.5" cy="1004.2" r="0.9" fill="#777"/>
<circle cx="4.5" cy="1007.6" r="0.9" fill="#777"/>
<circle cx="4.5" cy="1011.0" r="0.9" fill="#777"/>
<circle cx="4.5" cy="1014.4" r="0.9" fill="#777"/>
<circle cx="4.5" cy="1017.8" r="0.9" fill="#777"/>
<path d="M21 1001 H33 L29 1006 V1012 H25 V1006 Z" fill="#f0f0f0" stroke="#cfcfcf" stroke-width="1"/>
<path d="M45 996.5 h12 l-4.5 5 v6 h-3 v-6 z" fill="#f4f4f4" stroke="#d0d0d0" stroke-width="1"/><path d="M48 999.5 h12 l-4.5 5 v6 h-3 v-6 z" fill="#f4f4f4" stroke="#d0d0d0" stroke-width="1"/><path d="M51 1002.5 h12 l-4.5 5 v6 h-3 v-6 z" fill="#f4f4f4" stroke="#d0d0d0" stroke-width="1"/>
<path d="M72 996.5 h12 l-4.5 5 v6 h-3 v-6 z" fill="#d98ce8" stroke="#6a1a8a" stroke-width="1.2"/><path d="M75 999.5 h12 l-4.5 5 v6 h-3 v-6 z" fill="#d98ce8" stroke="#6a1a8a" stroke-width="1.2"/><path d="M78 1002.5 h12 l-4.5 5 v6 h-3 v-6 z" fill="#e6a6f0" stroke="#6a1a8a" stroke-width="1.2"/>
<path d="M102 996 V1012 L106 1008 L109 1014 L111 1013 L108 1007 L113 1007 Z" fill="#fafafa" stroke="#cfcfcf" stroke-width="1"/>
<path d="M129 1004 h5 l-2.5 2.5 z" fill="#9a9a9a"/>
<path d="M144 997 V1012 L148 1008 L151 1014 L153 1013 L150 1007 L155 1007 Z" fill="#fafafa" stroke="#cfcfcf" stroke-width="1"/><path d="M150 997 L160 1007 L156 1013" fill="none" stroke="#c8c8c8" stroke-width="2"/>
<line x1="168.5" y1="995" x2="168.5" y2="1017" stroke="#555"/>
<g transform="translate(0 1)"><circle cx="184" cy="1002" r="2.6" fill="#5aaad8" stroke="#1b3a52" stroke-width="1"/>
<path d="M189.5 1008.3 h7 l-2 2.5 v3.5 h-3 v-3.5 z" fill="#9b4fc0"/>
<path d="M211 995 V1014" stroke="#1d6a9c" stroke-width="2.2"/>
<path d="M216.5 1008.3 h7 l-2 2.5 v3.5 h-3 v-3.5 z" fill="#9b4fc0"/>
<rect x="232" y="997" width="13" height="12" fill="#6cb8e0" stroke="#1b3a52" stroke-width="1.4"/>
<path d="M245.5 1008.3 h7 l-2 2.5 v3.5 h-3 v-3.5 z" fill="#9b4fc0"/>
<path d="M259 1006 Q264 996 270 1000 Q275 1003 278 999 L278 1006 Q273 1013 268 1008 Q263 1005 261 1012 Z" fill="#3d9ad0" stroke="#1b3a52" stroke-width="1.2"/>
<path d="M273.5 1008.3 h7 l-2 2.5 v3.5 h-3 v-3.5 z" fill="#9b4fc0"/>
<path d="M287 1001 L293 997 L302 999 V1009 L295 1013 L287 1010 Z" fill="#6cb8e0" stroke="#1b3a52" stroke-width="1.2"/><path d="M287 1001 L295 1004 L302 999 M295 1004 V1013" fill="none" stroke="#1b3a52" stroke-width="1"/>
<path d="M300.5 1008.3 h7 l-2 2.5 v3.5 h-3 v-3.5 z" fill="#9b4fc0"/>
<path d="M314 1012 L330 997" stroke="#1d6a9c" stroke-width="1.8" stroke-dasharray="3 1.5"/>
<path d="M326.5 1008.3 h7 l-2 2.5 v3.5 h-3 v-3.5 z" fill="#9b4fc0"/>
<path d="M341 1001 L352 997 V1010 L341 1014 Z" fill="#6cb8e0" stroke="#1b3a52" stroke-width="1.2"/><path d="M346 994 V1016" stroke="#1b3a52" stroke-width="1"/>
<path d="M353.5 1008.3 h7 l-2 2.5 v3.5 h-3 v-3.5 z" fill="#9b4fc0"/>
<rect x="371" y="999" width="6" height="6" fill="#6cb8e0" stroke="#1b3a52" stroke-width="1"/>
<path d="M379.5 1008.3 h7 l-2 2.5 v3.5 h-3 v-3.5 z" fill="#9b4fc0"/>
<path d="M396 997 V1011 Q396 1014 399 1014 H409" fill="none" stroke="#1d6a9c" stroke-width="2"/><path d="M400 997 V1011 M404 997 V1011 M398 1002 H410 M398 1007 H410" stroke="#d0d8e0" stroke-width="0.8"/>
<path d="M407.5 1008.3 h7 l-2 2.5 v3.5 h-3 v-3.5 z" fill="#9b4fc0"/>
<path d="M424 998 V1013 M424 998 H436" stroke="#111" stroke-width="1.8" fill="none"/><rect x="421.5" y="995.5" width="4.5" height="4.5" fill="#fff" stroke="#111"/><rect x="434.5" y="995.5" width="4.5" height="4.5" fill="#fff" stroke="#111"/><rect x="421.5" y="1011.5" width="4.5" height="4.5" fill="#fff" stroke="#111"/>
<path d="M434.5 1008.3 h7 l-2 2.5 v3.5 h-3 v-3.5 z" fill="#9b4fc0"/>
<path d="M449 1012 L463 997" stroke="#1d6a9c" stroke-width="1.8"/><rect x="454" y="1002.5" width="4" height="4" fill="#fff" stroke="#111"/>
<path d="M461.5 1008.3 h7 l-2 2.5 v3.5 h-3 v-3.5 z" fill="#9b4fc0"/>
<circle cx="484" cy="1005" r="5" fill="none" stroke="#1b3a52" stroke-width="1.6"/><circle cx="484" cy="1005" r="1.8" fill="#3d8ac0"/><path d="M476 1005 H492 M484 997 V1013" stroke="#1d6a9c" stroke-width="1.4"/>
<path d="M489.5 1008.3 h7 l-2 2.5 v3.5 h-3 v-3.5 z" fill="#9b4fc0"/>
<path d="M504 997 H511 V1013 H504 Z M511 1000 H518 V1011 H511" fill="#fafafa" stroke="#333" stroke-width="1.1"/><path d="M502 1005 H519" stroke="#1d6a9c" stroke-dasharray="2 1.2"/>
<path d="M516.1 1008.3 h7 l-2 2.5 v3.5 h-3 v-3.5 z" fill="#9b4fc0"/>
<path d="M530 1003 L537 996 L542 1001 L535 1008 Z" fill="#fff" stroke="#111" stroke-width="1.4"/><path d="M530 1004 L534 1009" stroke="#1d6a9c" stroke-width="2"/>
<path d="M541.5 1008.3 h7 l-2 2.5 v3.5 h-3 v-3.5 z" fill="#9b4fc0"/>
<path d="M557 1005 L561 1013 L568 997 H574" fill="none" stroke="#111" stroke-width="1.5"/>
<path d="M569.5 1008.3 h7 l-2 2.5 v3.5 h-3 v-3.5 z" fill="#9b4fc0"/>
<rect x="582.5" y="997.5" width="20" height="9" fill="#fff" stroke="#111"/><path d="M592 998 V1006" stroke="#111"/><text x="593.5" y="1005" font-size="6.5" font-family="Liberation Sans">0.3</text>
<path d="M597.5 1008.3 h7 l-2 2.5 v3.5 h-3 v-3.5 z" fill="#9b4fc0"/>
<circle cx="621" cy="1003" r="5" fill="#fff" stroke="#111" stroke-width="1.2"/><text x="618.2" y="1005.5" font-size="7" font-family="Liberation Sans">N</text><path d="M617 1007 L611 1013" stroke="#111" stroke-width="1.6"/>
<path d="M624.5 1008.3 h7 l-2 2.5 v3.5 h-3 v-3.5 z" fill="#9b4fc0"/>
<rect x="637.5" y="996.5" width="14" height="13" fill="#fff" stroke="#111"/><text x="640" y="1007" font-size="11" font-family="Liberation Sans">A</text><path d="M640 1014 L644.5 1009 L649 1014 Z" fill="#111"/>
<path d="M649.5 1008.3 h7 l-2 2.5 v3.5 h-3 v-3.5 z" fill="#9b4fc0"/>
<path d="M664 1012 L669 1002 L673 1007 L677 999 L681 1003 L683 997 M672 1004 L681 1000" fill="none" stroke="#111" stroke-width="1.5"/>
<path d="M677.9 1008.3 h7 l-2 2.5 v3.5 h-3 v-3.5 z" fill="#9b4fc0"/>
<path d="M692 997 V1004 H699 M692 1004 L699 998" fill="none" stroke="#1d6a9c" stroke-width="1.1"/><path d="M692 1007 Q694 1010 692 1013 M695 1007 Q697 1010 695 1013 M698 1007 Q700 1010 698 1013 M701 1007 Q703 1010 701 1013" fill="none" stroke="#111" stroke-width="1"/>
<path d="M703.3 1008.3 h7 l-2 2.5 v3.5 h-3 v-3.5 z" fill="#9b4fc0"/>
<circle cx="727" cy="1004" r="6" fill="#fff" stroke="#111" stroke-width="1.1"/><path d="M721 1004 H733" stroke="#111"/><text x="723.5" y="1008" font-size="5.5" font-family="Liberation Sans">A1</text><path d="M721 1009 L716 1014" stroke="#111" stroke-width="1.5"/>
<path d="M731.5 1008.3 h7 l-2 2.5 v3.5 h-3 v-3.5 z" fill="#9b4fc0"/>
<path d="M746 996 H756 V1006 L751 1013 L746 1006 Z" fill="#f4f4f4" stroke="#333" stroke-width="1" stroke-dasharray="1.5 1"/>
<path d="M756.5 1008.3 h7 l-2 2.5 v3.5 h-3 v-3.5 z" fill="#9b4fc0"/>
<rect x="772.5" y="996.5" width="14" height="13" fill="#fff" stroke="#111"/><text x="774" y="1007" font-size="10" font-family="Liberation Sans">A</text><circle cx="783.5" cy="999.5" r="1.5" fill="none" stroke="#111" stroke-width="0.8"/>
<path d="M784.5 1008.3 h7 l-2 2.5 v3.5 h-3 v-3.5 z" fill="#9b4fc0"/>
<circle cx="806" cy="1005" r="6.5" fill="#fff" stroke="#222" stroke-width="1.2"/><path d="M806 1005 V998.5 A6.5 6.5 0 0 0 799.5 1005 Z M806 1005 V1011.5 A6.5 6.5 0 0 0 812.5 1005 Z" fill="#111"/>
<path d="M811.5 1008.3 h7 l-2 2.5 v3.5 h-3 v-3.5 z" fill="#9b4fc0"/>
<path d="M827 1004.5 H834" stroke="#111" stroke-width="1.5"/><rect x="834" y="1000" width="8" height="8" fill="#6cb8e0" stroke="#1b3a52"/>
<path d="M839.5 1008.3 h7 l-2 2.5 v3.5 h-3 v-3.5 z" fill="#9b4fc0"/>
<path d="M853 1004.5 H871" stroke="#111" stroke-width="1.5"/><rect x="857.5" y="1000.5" width="8" height="8" fill="#6cb8e0" stroke="#1b3a52"/>
<path d="M866.5 1008.3 h7 l-2 2.5 v3.5 h-3 v-3.5 z" fill="#9b4fc0"/>
<rect x="880.5" y="997.5" width="17" height="13" fill="#55a8dc" stroke="#1b3a52"/><path d="M889 1003 L894 998 L898 1002 L893 1007 Z" fill="#fff" stroke="#111" stroke-width="0.9"/>
<path d="M894.5 1008.3 h7 l-2 2.5 v3.5 h-3 v-3.5 z" fill="#9b4fc0"/>
<path d="M911.5 996 V1014" stroke="#1d6a9c" stroke-width="2"/><path d="M915 1003 L920 998 L924 1002 L919 1007 Z" fill="#fff" stroke="#111" stroke-width="0.9"/>
<path d="M921.5 1008.3 h7 l-2 2.5 v3.5 h-3 v-3.5 z" fill="#9b4fc0"/>
<circle cx="936" cy="1002" r="2.6" fill="#5aaad8" stroke="#1b3a52" stroke-width="1"/><path d="M942 1003 L947 998 L951 1002 L946 1007 Z" fill="#fff" stroke="#111" stroke-width="0.9"/>
<path d="M948.1 1008.3 h7 l-2 2.5 v3.5 h-3 v-3.5 z" fill="#9b4fc0"/>
</g>
<line x1="963.5" y1="995" x2="963.5" y2="1017" stroke="#555"/>
<line x1="0" y1="1021.5" x2="1919" y2="1021.5" stroke="#9a9a9a"/>
<path d="M1868 1034 L1871.5 1030.5 L1875 1034" fill="none" stroke="#777" stroke-width="1.2"/>
<path d="M1901 1031 L1909 1026 L1916 1030 V1035 L1908 1039 L1901 1035 Z" fill="#f0f0f0" stroke="#333" stroke-width="1"/><path d="M1901 1031 L1908 1035 L1916 1030 M1908 1035 V1039" fill="none" stroke="#333" stroke-width="0.9"/><circle cx="1908" cy="1030.5" r="2" fill="#fff" stroke="#333" stroke-width="0.8"/>
</svg>
<div class="t" style="left:80px;top:974px;font-size:12.5px;color:#000">模型</div>
<div class="t" style="left:122px;top:974px;font-size:12.5px;color:#000">运动算例 1</div>
<div class="t" style="left:2px;top:1026px;font-size:12px;color:#000">SOLIDWORKS Premium 2025 SP2.0</div>
<div class="t" style="left:1353px;top:1026px;font-size:12px;color:#000">-267.53mm</div>
<div class="t" style="left:1447px;top:1026px;font-size:12px;color:#000">-87.58mm</div>
<div class="t" style="left:1524px;top:1026px;font-size:12px;color:#000">0mm 完全定义</div>
<div class="t" style="left:1621px;top:1026px;font-size:12px;color:#000">在编辑 草图1</div>
<div class="t" style="left:1816px;top:1026px;font-size:12px;color:#aaa">自定义</div>
<!-- watermarks -->
<svg class="a" style="left:0;top:0;pointer-events:none" width="1919" height="1040" viewBox="0 0 1919 1040">
<defs><g id="wm"><text x="0" y="12" text-anchor="middle" font-family="Liberation Sans" font-size="38">Senshow</text><text x="4" y="50" text-anchor="middle" font-family="Liberation Sans" font-size="25" letter-spacing="8">新思诺软件</text></g></defs>
<g fill="none" stroke-width="1">
<use href="#wm" transform="translate(-23.4 77.6) rotate(-28.5)" stroke="rgba(0,20,40,0.11)"/>
<use href="#wm" transform="translate(-24 77) rotate(-28.5)" stroke="rgba(255,255,255,0.2)"/>
<use href="#wm" transform="translate(730.6 77.6) rotate(-28.5)" stroke="rgba(0,20,40,0.11)"/>
<use href="#wm" transform="translate(730 77) rotate(-28.5)" stroke="rgba(255,255,255,0.2)"/>
<use href="#wm" transform="translate(1382.6 77.6) rotate(-28.5)" stroke="rgba(0,20,40,0.11)"/>
<use href="#wm" transform="translate(1382 77) rotate(-28.5)" stroke="rgba(255,255,255,0.2)"/>
<use href="#wm" transform="translate(295.6 281.6) rotate(-28.5)" stroke="rgba(0,20,40,0.11)"/>
<use href="#wm" transform="translate(295 281) rotate(-28.5)" stroke="rgba(255,255,255,0.2)"/>
<use href="#wm" transform="translate(1045.6 281.6) rotate(-28.5)" stroke="rgba(0,20,40,0.11)"/>
<use href="#wm" transform="translate(1045 281) rotate(-28.5)" stroke="rgba(255,255,255,0.2)"/>
<use href="#wm" transform="translate(1697.6 281.6) rotate(-28.5)" stroke="rgba(0,20,40,0.11)"/>
<use href="#wm" transform="translate(1697 281) rotate(-28.5)" stroke="rgba(255,255,255,0.2)"/>
<use href="#wm" transform="translate(667.6 505.6) rotate(-28.5)" stroke="rgba(0,20,40,0.11)"/>
<use href="#wm" transform="translate(667 505) rotate(-28.5)" stroke="rgba(255,255,255,0.2)"/>
<use href="#wm" transform="translate(1320.6 505.6) rotate(-28.5)" stroke="rgba(0,20,40,0.11)"/>
<use href="#wm" transform="translate(1320 505) rotate(-28.5)" stroke="rgba(255,255,255,0.2)"/>
<use href="#wm" transform="translate(270.6 672.6) rotate(-28.5)" stroke="rgba(0,20,40,0.11)"/>
<use href="#wm" transform="translate(270 672) rotate(-28.5)" stroke="rgba(255,255,255,0.2)"/>
<use href="#wm" transform="translate(1024.6 669.6) rotate(-28.5)" stroke="rgba(0,20,40,0.11)"/>
<use href="#wm" transform="translate(1024 669) rotate(-28.5)" stroke="rgba(255,255,255,0.2)"/>
<use href="#wm" transform="translate(1680.6 669.6) rotate(-28.5)" stroke="rgba(0,20,40,0.11)"/>
<use href="#wm" transform="translate(1680 669) rotate(-28.5)" stroke="rgba(255,255,255,0.2)"/>
<use href="#wm" transform="translate(647.6 901.6) rotate(-28.5)" stroke="rgba(0,20,40,0.11)"/>
<use href="#wm" transform="translate(647 901) rotate(-28.5)" stroke="rgba(255,255,255,0.2)"/>
<use href="#wm" transform="translate(1300.6 901.6) rotate(-28.5)" stroke="rgba(0,20,40,0.11)"/>
<use href="#wm" transform="translate(1300 901) rotate(-28.5)" stroke="rgba(255,255,255,0.2)"/>
<use href="#wm" transform="translate(249.6 1057.6) rotate(-28.5)" stroke="rgba(0,20,40,0.11)"/>
<use href="#wm" transform="translate(249 1057) rotate(-28.5)" stroke="rgba(255,255,255,0.2)"/>
<use href="#wm" transform="translate(1003.6 1057.6) rotate(-28.5)" stroke="rgba(0,20,40,0.11)"/>
<use href="#wm" transform="translate(1003 1057) rotate(-28.5)" stroke="rgba(255,255,255,0.2)"/>
<use href="#wm" transform="translate(1659.6 1057.6) rotate(-28.5)" stroke="rgba(0,20,40,0.11)"/>
<use href="#wm" transform="translate(1659 1057) rotate(-28.5)" stroke="rgba(255,255,255,0.2)"/>
</g></svg>
</body></html>
